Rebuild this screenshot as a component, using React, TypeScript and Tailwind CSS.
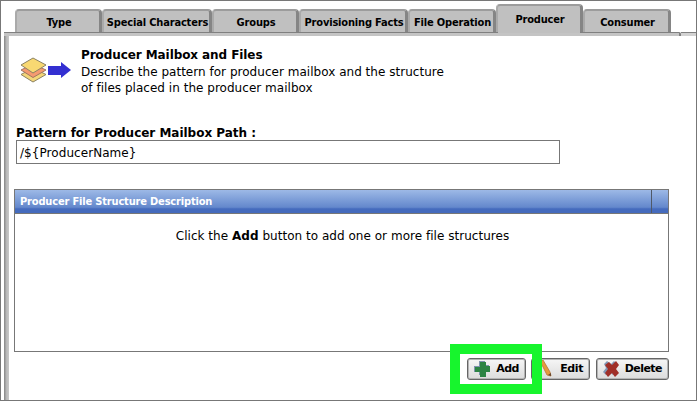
import type { ReactNode } from "react";

const tabs = [
  { label: "Type", box: "w-[87px]" },
  { label: "Special Characters", box: "w-[110px]" },
  { label: "Groups", box: "w-[87px]" },
  { label: "Provisioning Facts", box: "w-[109px]" },
  { label: "File Operation", box: "w-[88px]" },
  { label: "Producer", box: "w-[87px]", active: true },
  { label: "Consumer", box: "w-[88px]" },
];

function Tab({ label, box, active }: { label: string; box: string; active?: boolean }) {
  return (
    <div
      className={`${box} ${active ? "h-[28px] pt-[3px]" : "h-[23px] pt-[3px]"} flex shrink-0 items-center justify-center rounded-t-[4px] border-t-2 border-r-[3px] border-l-2 border-t-[#9c9c9c] border-r-[#858585] border-l-[#aaaaaa] bg-[#c0c0c0] pl-[2px] text-[11px] font-bold whitespace-nowrap`}
    >
      <span className="tracking-[-0.17px]">{label}</span>
    </div>
  );
}

function Button({ label, box, text, children }: { label: string; box: string; text: string; children: ReactNode }) {
  return (
    <button
      className={`${box} flex h-[22px] shrink-0 items-center justify-between rounded-[3px] border border-[#666] bg-linear-to-b from-[#f6f6f6] to-[#dcdcdc] pr-[6px] pl-[5px] text-[11px] font-bold shadow-[inset_0_0_0_1px_#b4b4b4]`}
    >
      {children}
      <span className={text}>{label}</span>
    </button>
  );
}

export default function App() {
  return (
    <div className="relative flex h-[401px] w-[697px] flex-col overflow-hidden border border-[#777] bg-white font-['DejaVu_Sans_Condensed','DejaVu_Sans',sans-serif] text-black">
      <div className="flex h-[31px] shrink-0 items-end pl-[14px]">
        {tabs.map((t) => (
          <Tab key={t.label} label={t.label} box={t.box} active={t.active} />
        ))}
      </div>
      <div className="ml-[3px] flex h-[4px] shrink-0 items-start">
        <div className="flex h-[4px] w-[677px] rounded-tr-[2px] border-t border-r-2 border-[#808080] bg-[#c4c4c4]">
          <div className="-mt-px ml-[494px] h-px w-[82px] bg-[#c0c0c0]" />
        </div>
        <div className="h-[4px] flex-1 border-t border-[#808080] bg-[#d2d2d2]" />
      </div>
      <div className="ml-[3px] flex flex-1">
        <div className="w-[5px] shrink-0 bg-linear-to-r from-[#858585] via-[#b8b8b8] to-[#c8c8c8]" />
        <div className="flex w-[660px] flex-col pl-[5px] font-['DejaVu_Sans',sans-serif] text-[12px] leading-[16px]">
          <div className="flex h-[89px] pt-[11px] pl-[6px]">
            <svg className="mt-[10px] h-[26px] w-[52px] shrink-0" viewBox="0 0 52 26">
              <path d="M1 17.5 13 11 26 17.5 13 25Z" fill="#f3d578" stroke="#8b8263" />
              <path d="M1 13 13 7 26 13 13 20.5Z" fill="#f59a70" stroke="#a17562" />
              <path d="M1 8 13 1 26 8 13 16Z" fill="#f8d872" stroke="#8b8263" />
              <path d="M28 9H41V5L51 13 41 21V18H28Z" fill="#332fd1" />
            </svg>
            <div className="ml-[9px] whitespace-nowrap">
              <div className="tracking-[-0.08px] font-bold">Producer Mailbox and Files</div>
              <div className="pt-px tracking-[0.025px]">Describe the pattern for producer mailbox and the structure</div>
              <div className="tracking-[0.025px]">of files placed in the producer mailbox</div>
            </div>
          </div>
          <div className="ml-[2px] flex h-[15px] tracking-[-0.02px] font-bold">Pattern for Producer Mailbox Path :</div>
          <div className="ml-[2px] flex h-[24px] w-[544px] items-center border border-[#777] pt-px pl-[3px] tracking-[0.06px]">
            {"/${ProducerName}"}
          </div>
          <div className="mt-[25px] h-[163px] w-[655px] border border-[#777]">
            <div className="flex h-[24px] border-b border-[#777] bg-linear-to-b from-[#9db9e6] via-[#6488cc] via-75% to-[#456bbd] to-82% font-['DejaVu_Sans_Condensed',sans-serif] text-[11px] font-bold text-white">
              <div className="flex flex-1 items-center pl-[5px] tracking-[-0.17px]">Producer File Structure Description</div>
              <div className="w-[17px] border-l border-[#4f5968]" />
            </div>
            <div className="pt-[14px] pl-[2px] text-center tracking-[0.03px]">
              Click the <b>Add</b> button to add one or more file structures
            </div>
          </div>
          <div className="mt-[6px] flex w-[655px] justify-end">
            <Button label="Add" box="w-[59px] mr-[5px]" text="tracking-[-0.5px]">
              <svg className="h-[18px] w-[18px] shrink-0" viewBox="0 0 18 18">
                <path d="M6 1H12V5H16V11H12V15H6V12H1V6H6Z" fill="#7f93ad" />
                <path d="M7 2H13V6H17V12H13V17H7V12H2V7H7Z" fill="#2c8444" />
              </svg>
            </Button>
            <Button label="Edit" box="w-[59px] mr-[6px]" text="tracking-[-0.4px]">
              <svg className="h-[18px] w-[16px] shrink-0" viewBox="0 0 16 18">
                <path d="M3 1 6 0 13 12 14 16 10 15Z" fill="#e69a3d" stroke="#b87535" strokeWidth=".8" />
                <path d="M11 15 14 13V16Z" fill="#664730" />
              </svg>
            </Button>
            <Button label="Delete" box="w-[73px]" text="tracking-[-0.55px]">
              <svg className="h-[18px] w-[18px] shrink-0" viewBox="0 0 18 18">
                <path d="M2 4 5 1 9 4 12 1 15 4 12 8 15 12 11 15 8 12 4 15 1 12 4 8Z" fill="#8298b7" />
                <path d="M3 5 7 2 10 5 14 1 17 5 14 9 17 13 13 17 10 13 6 17 3 13 6 9Z" fill="#a02f28" />
              </svg>
            </Button>
          </div>
        </div>
      </div>
      <div className="pointer-events-none absolute top-[343px] left-[449px] h-[50px] w-[92px] border-10 border-[#17f52d]" />
    </div>
  );
}
